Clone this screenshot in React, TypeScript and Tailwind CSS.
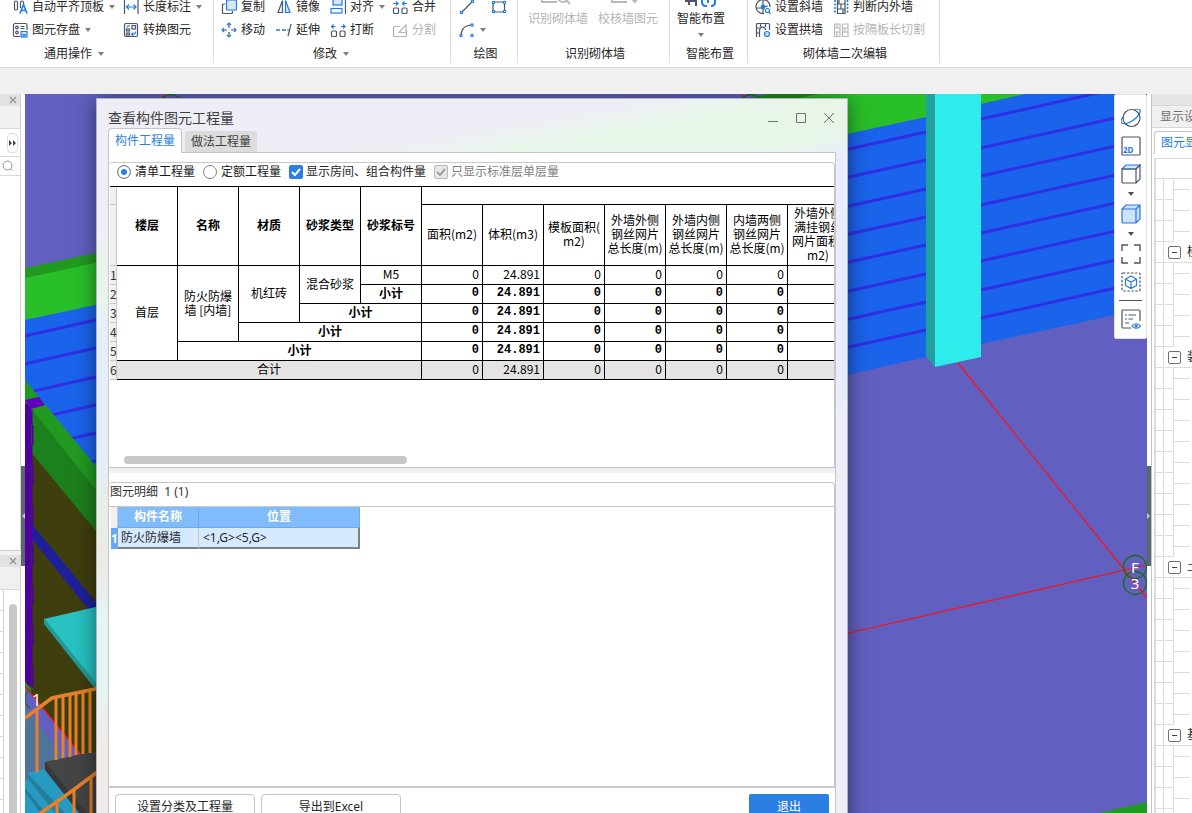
import { useState } from "react"
import type { ReactNode } from "react"
import clsx from "clsx"

type IconProps = { children: ReactNode; size?: number }

function Icon({ children, size = 16 }: IconProps) {
  return (
    <svg
      width={size}
      height={size}
      viewBox={`0 0 ${size} ${size}`}
      fill="none"
      stroke="#4b5468"
      strokeWidth="1.2"
      className="shrink-0"
      aria-hidden="true"
    >
      {children}
    </svg>
  )
}

function Caret({ dark = false }: { dark?: boolean }) {
  return (
    <svg width="8" height="4" viewBox="0 0 8 4" className="shrink-0" aria-hidden="true">
      <path d="M1 0h6L4 4z" fill={dark ? "#4b5060" : "#808080"} />
    </svg>
  )
}

const BLUE = "#1f7ae6"

const icons = {
  align: (
    <Icon>
      <rect x="2.5" y="2" width="3" height="9" rx="1.5" />
      <path d="M8.5 9V3.5a1.5 1.5 0 0 1 3 0V5" />
      <path d="M8 14.5l3.5-9 3.5 9M9.3 11.5h4.5" stroke={BLUE} strokeWidth="1.6" />
    </Icon>
  ),
  save: (
    <Icon>
      <path d="M8 14.5H3A1.5 1.5 0 0 1 1.5 13V3A1.5 1.5 0 0 1 3 1.5h10.5A1.5 1.5 0 0 1 15 3v5" />
      <circle cx="5" cy="5.5" r="1.3" />
      <circle cx="5" cy="10.5" r="1.3" />
      <path d="M8.5 4.5h4M8.5 6.5h4" />
      <path d="M9 9.5h6v5.5H9z" fill="#cfe2fb" stroke={BLUE} />
      <path d="M11 15v-2.5h2V15" stroke={BLUE} />
    </Icon>
  ),
  length: (
    <Icon>
      <path d="M1.5 1v14M15 1v14" />
      <path d="M3.5 8h9.5M6 5.5L3.5 8 6 10.5M10.5 5.5L13 8l-2.5 2.5" stroke={BLUE} />
    </Icon>
  ),
  convert: (
    <Icon>
      <rect x="1.5" y="1.5" width="13" height="13" rx="1.5" />
      <rect x="9" y="3.5" width="3.5" height="3.5" />
      <rect x="3.5" y="7" width="3" height="2" />
      <rect x="3.5" y="11" width="3" height="2" />
      <path d="M4 5.5C4 4 5 3.5 7 4M12.5 9.5c0 2-1 3-3.5 3M10 10.5l-1.5 2 2 1" stroke={BLUE} />
    </Icon>
  ),
  copy: (
    <Icon>
      <path d="M4 5H2.5A1 1 0 0 0 1.5 6v7.5a1 1 0 0 0 1 1h8a1 1 0 0 0 1-1V12" />
      <rect x="5.5" y="1" width="10" height="10" rx="1" fill="#d6e7fc" stroke={BLUE} />
    </Icon>
  ),
  move: (
    <Icon>
      <path d="M8 1v5M8 10v5M1 8h5M10 8h5" />
      <path d="M6 3l2-2 2 2M6 13l2 2 2-2M3 6L1 8l2 2M13 6l2 2-2 2" stroke={BLUE} />
    </Icon>
  ),
  mirror: (
    <Icon>
      <path d="M6.5 1.5v12H2z" />
      <path d="M9.5 1.5v12H14z" fill="#d6e7fc" stroke={BLUE} />
    </Icon>
  ),
  extend: (
    <Icon>
      <path d="M0 8h4M6 8h4" stroke={BLUE} strokeWidth="1.5" />
      <path d="M11 8h2.500M15 2c-1 5-2 8-3 12" />
    </Icon>
  ),
  alignTo: (
    <Icon>
      <path d="M15.5 0v15" />
      <rect x="3" y="0" width="9" height="6" fill="#d6e7fc" stroke={BLUE} />
      <rect x="1" y="9.5" width="11" height="4.5" stroke={BLUE} />
    </Icon>
  ),
  break: (
    <Icon>
      <rect x="1.5" y="9" width="5" height="5.5" rx="1" />
      <rect x="10" y="9" width="5" height="5.5" rx="1" />
      <path d="M1.5 4.5h4M3.5 2.5l-2 2 2 2M15 4.5h-4M13 2.5l2 2-2 2" stroke={BLUE} />
    </Icon>
  ),
  merge: (
    <Icon>
      <rect x="1.5" y="9" width="5" height="5.5" rx="1" />
      <rect x="10" y="9" width="5" height="5.5" rx="1" />
      <path d="M1.5 4.5h4M4 2.5l2 2-2 2M15 4.5h-4M12.5 2.5l-2 2 2 2" stroke={BLUE} />
    </Icon>
  ),
  split: (
    <Icon>
      <path
        d="M8 4.5H2.5a1 1 0 0 0-1 1v8a1 1 0 0 0 1 1h11a1 1 0 0 0 1-1V8M7 10.5l7-7.5v7.5z"
        stroke="#b8b8b8"
      />
    </Icon>
  ),
  line: (
    <Icon>
      <path d="M2.5 13.5l11-11" />
      <circle cx="2.5" cy="13.5" r="1.2" fill="#fff" stroke={BLUE} />
      <circle cx="13.5" cy="2.5" r="1.2" fill="#fff" stroke={BLUE} />
    </Icon>
  ),
  rect: (
    <Icon>
      <rect x="2" y="3" width="11.5" height="10" rx="1" />
      <circle cx="2.5" cy="3.5" r="1.2" fill="#fff" stroke={BLUE} />
      <circle cx="13.5" cy="3.5" r="1.2" fill="#fff" stroke={BLUE} />
      <circle cx="2.5" cy="12.5" r="1.2" fill="#fff" stroke={BLUE} />
      <circle cx="13.5" cy="12.5" r="1.2" fill="#fff" stroke={BLUE} />
    </Icon>
  ),
  arc: (
    <Icon>
      <path d="M2 13.5C2 7 6 3 13 3" />
      <circle cx="2" cy="13.5" r="1.2" fill="#fff" stroke={BLUE} />
      <circle cx="13" cy="3" r="1.2" fill="#fff" stroke={BLUE} />
      <circle cx="13" cy="13.5" r="1.2" fill="#fff" stroke={BLUE} />
    </Icon>
  ),
  slope: (
    <Icon>
      <path d="M9 14.5A7 7 0 1 1 15 8" />
      <path d="M8 0v14M2 9h5M9 8l4-1" />
      <circle cx="8" cy="8" r="1.8" fill={BLUE} stroke={BLUE} />
      <circle cx="12.5" cy="11.5" r="2" stroke={BLUE} />
      <path d="M14 13l1.5 2" stroke={BLUE} />
    </Icon>
  ),
  arch: (
    <Icon>
      <path d="M1.5 15V2.5a1 1 0 0 1 1-1h11a1 1 0 0 1 1 1V8M4.5 15V9c0-5 6-5 6-1M1.5 6h3M5.5 1.5V5M10.5 1.5V5M1.5 11h3" />
      <circle cx="12" cy="12" r="2.5" fill="#cfe2fb" stroke={BLUE} />
    </Icon>
  ),
  judge: (
    <Icon>
      <path d="M2 1v14M14.5 1v14" stroke={BLUE} strokeWidth="1.6" strokeDasharray="2 1.5" />
      <path d="M4.5 1v13.5h7.5V1M4.5 5h7.5M4.5 10h7.5M8 5v5M6 1v4M10 10v4" />
    </Icon>
  ),
  cut: (
    <Icon>
      <path
        d="M1.5 2h5.5v12.5H1.5zM9.5 2H15v12.5H9.5zM1.5 6H7M1.5 10H7M4 2v4M4 10v4M9.5 6H15M9.5 10H15M12 6v4"
        stroke="#b8b8b8"
      />
    </Icon>
  ),
  ocr: (
    <Icon size={34}>
      <path d="M1 2v13h15" stroke="#b8b8b8" strokeWidth="2" />
      <circle cx="22" cy="10" r="5" stroke="#b8b8b8" strokeWidth="2" />
      <path d="M25 13l4 4" stroke="#b8b8b8" strokeWidth="2" />
    </Icon>
  ),
  verify: (
    <Icon size={34}>
      <path d="M1 2v13h15M20 11l4 4 6-8" stroke="#b8b8b8" strokeWidth="2" />
    </Icon>
  ),
  smart: (
    <Icon size={34}>
      <path d="M1 14h12M5 12v6M12 9v10" strokeWidth="2" />
      <path d="M18 13v2q0 4 4 4h1M27 19q4 0 4-4v-2M24 10v6" stroke={BLUE} strokeWidth="2" />
    </Icon>
  ),
}

function Tool({
  icon,
  label,
  caret,
  disabled,
}: {
  icon: ReactNode
  label?: string
  caret?: boolean
  disabled?: boolean
}) {
  return (
    <button
      type="button"
      disabled={disabled}
      aria-label={label ?? "绘图工具"}
      className="flex h-[23px] items-center gap-1 whitespace-nowrap text-[#262626] disabled:text-[#b4b4b4]"
    >
      {icon}
      {label}
      {caret && <Caret />}
    </button>
  )
}

function BigTool({
  icon,
  label,
  caret,
  disabled,
}: {
  icon: ReactNode
  label: string
  caret?: boolean
  disabled?: boolean
}) {
  return (
    <button
      type="button"
      disabled={disabled}
      className="flex flex-col items-center text-[#262626] disabled:text-[#b4b4b4]"
    >
      <span className="-mt-2 h-6 overflow-hidden">{icon}</span>
      <span className="leading-4">{label}</span>
      {caret && (
        <span className="mt-[6px]">
          <Caret />
        </span>
      )}
    </button>
  )
}

function Group({
  title,
  caret,
  className,
  titleClassName = "pl-[3px]",
  children,
}: {
  title: string
  caret?: boolean
  className: string
  titleClassName?: string
  children: ReactNode
}) {
  return (
    <section
      className={clsx("h-[63px] shrink-0 overflow-hidden border-r border-[#dcdcdc]", className)}
    >
      <div className="-mt-[5px] h-[46px]">{children}</div>
      <div
        className={clsx(
          "flex h-[26px] items-center justify-center gap-[5px] text-[#262626]",
          titleClassName
        )}
      >
        {title}
        {caret && <Caret />}
      </div>
    </section>
  )
}

function Ribbon() {
  return (
    <header className="flex h-[68px] shrink-0 overflow-hidden border-b border-[#dcdcdc] bg-white">
      <Group title="通用操作" caret className="w-[214px]" titleClassName="pr-16">
        <div className="grid grid-cols-[111px_auto] pl-3">
          <Tool icon={icons.align} label="自动平齐顶板" caret />
          <Tool icon={icons.length} label="长度标注" caret />
          <Tool icon={icons.save} label="图元存盘" caret />
          <Tool icon={icons.convert} label="转换图元" />
        </div>
      </Group>
      <Group title="修改" caret className="w-[237px]" titleClassName="pr-px">
        <div className="grid grid-cols-[55px_54px_62px_auto] pl-[7px]">
          <Tool icon={icons.copy} label="复制" />
          <Tool icon={icons.mirror} label="镜像" />
          <Tool icon={icons.alignTo} label="对齐" caret />
          <Tool icon={icons.merge} label="合并" />
          <Tool icon={icons.move} label="移动" />
          <Tool icon={icons.extend} label="延伸" />
          <Tool icon={icons.break} label="打断" />
          <Tool icon={icons.split} label="分割" disabled />
        </div>
      </Group>
      <Group title="绘图" className="w-[67px]">
        <div className="grid grid-cols-[32px_auto] pl-2">
          <Tool icon={icons.line} />
          <Tool icon={icons.rect} />
          <Tool icon={icons.arc} caret />
        </div>
      </Group>
      <Group title="识别砌体墙" className="w-[152px]">
        <div className="flex gap-[10px] pl-[10px]">
          <BigTool icon={icons.ocr} label="识别砌体墙" disabled />
          <BigTool icon={icons.verify} label="校核墙图元" disabled />
        </div>
      </Group>
      <Group title="智能布置" className="w-[78px]">
        <div className="flex pl-[7px]">
          <BigTool icon={icons.smart} label="智能布置" caret />
        </div>
      </Group>
      <Group title="砌体墙二次编辑" className="w-[192px]">
        <div className="grid grid-cols-[78px_auto] pl-[7px]">
          <Tool icon={icons.slope} label="设置斜墙" />
          <Tool icon={icons.judge} label="判断内外墙" />
          <Tool icon={icons.arch} label="设置拱墙" />
          <Tool icon={icons.cut} label="按隔板长切割" disabled />
        </div>
      </Group>
    </header>
  )
}

function CloseMark() {
  return (
    <button type="button" aria-label="关闭面板" className="pr-[3px]">
      <svg width="8" height="8" viewBox="0 0 8 8" stroke="#909090" strokeWidth="1.2">
        <path d="M1 1l6 6M7 1L1 7" />
      </svg>
    </button>
  )
}

function LeftPanels() {
  return (
    <aside className="flex w-[21px] shrink-0 flex-col overflow-hidden">
      <div className="flex h-[457px] shrink-0 flex-col border-r border-b border-[#d0d0d0] bg-white">
        <div className="flex h-3 items-center justify-end bg-[#e2e2e2]">
          <CloseMark />
        </div>
        <div className="h-[23px] border-b border-[#d8d8d8] bg-[#f0f0f0]" />
        <div className="flex h-7 items-center justify-end border-b border-[#d8d8d8] pr-[2px]">
          <button
            type="button"
            aria-label="展开"
            className="flex h-5 w-[11px] items-center justify-center rounded border border-[#dcdce4]"
          >
            <svg width="7" height="6" viewBox="0 0 7 6" fill="#3c4254" className="shrink-0">
              <path d="M0 0l3 3-3 3zM4 0l3 3-3 3z" />
            </svg>
          </button>
        </div>
        <div className="flex h-[19px] items-center border-b border-[#d8d8d8] pl-[2px]">
          <svg width="12" height="12" viewBox="0 0 12 12" fill="none" stroke="#909090">
            <circle cx="5.5" cy="5.5" r="4.5" />
            <path d="M8.5 8.5l2 2" />
          </svg>
        </div>
      </div>
      <div className="mt-1 flex flex-1 flex-col border-r border-[#d0d0d0] bg-white">
        <div className="flex h-3 items-center justify-end bg-[#e2e2e2]">
          <CloseMark />
        </div>
        <div className="h-[23px] border-b border-[#d8d8d8] bg-[#f0f0f0]" />
        <div className="flex flex-1 overflow-hidden">
          <div className="w-1 border-r border-[#d0d0d0]">
            {Array.from({ length: 12 }, (_, i) => (
              <div key={i} className="h-[21px] border-b border-[#d8d8d8]" />
            ))}
          </div>
          <div className="mt-[14px] ml-[5px] w-2 rounded-t-full bg-[#c8c8c8]" />
        </div>
      </div>
    </aside>
  )
}

function Splitter({ side }: { side: "left" | "right" }) {
  return (
    <div className="w-1 shrink-0 bg-white pt-[372px]">
      <div className="flex h-[100px] items-center bg-[#5c6870]">
        <svg width="4" height="6" viewBox="0 0 4 6" fill="#c4c8cc">
          <path d={side === "left" ? "M4 0L1 3l3 3z" : "M0 0l3 3-3 3z"} />
        </svg>
      </div>
    </div>
  )
}

const STRIPES_LEFT = [320, 348, 377, 405, 433, 461]
const STRIPES_MID = [132, 160, 189, 217, 245, 274, 302, 330]
const STRIPES_RIGHT = [119, 148, 176, 205, 233, 261, 290, 318]

// 3D model behind the dialog
function Scene() {
  return (
    <svg
      className="absolute inset-0 h-full w-full"
      viewBox="25 94 1122 719"
      preserveAspectRatio="xMinYMin slice"
      aria-hidden="true"
    >
      <rect x="25" y="94" width="1122" height="719" fill="#6160c0" />

      <path d="M25 268L100 252v12L25 278z" fill="#229a22" />
      <path d="M25 278l75-16v43L25 320z" fill="#29bf29" />
      <path d="M25 320l75-16v180L25 384z" fill="#1a64eb" />
      {STRIPES_LEFT.map((y) => (
        <path key={y} d={`M25 ${y + 16}L100 ${y - 1}`} stroke="#302fe8" strokeWidth="3" />
      ))}
      <path d="M25 380L100 471v342H25z" fill="#229a22" />
      <path d="M31 408l33 42 36 45v45L31 452z" fill="#1c801c" />
      <path d="M31 452l69 84v277L31 695z" fill="#3f3e0e" />
      <path d="M31 523l69 84v8h-7L31 538z" fill="#1f1f9c" />
      <path d="M44 619l56-13v84z" fill="#29c2c2" />
      <path d="M44 618v6l56 71v-7z" fill="#229a9a" />
      <path d="M25 686l75 92v35H25z" fill="#6160c0" />
      <path d="M25 706l45 60 30 47H25z" fill="#50739b" />
      <path d="M25 402l6 6v280l-6-6z" fill="#5100a0" />
      <path
        d="M31.5 410v15M32.5 425v20M31.5 445v20M32.5 465v20M31.5 485v20M32.5 505v20M31.5 525v20M32.5 545v20M31.5 565v20M32.5 585v20M31.5 605v20M32.5 625v20M31.5 645v20M32.5 665v22"
        stroke="#5100a0"
        strokeWidth="2"
      />
      <path d="M25 400l14-3 6 8-14 4z" fill="#6000c0" />
      <path d="M80 754l20-5v64H80z" fill="#3f3e0e" />
      <path d="M25 686l56 69" stroke="#ff1010" strokeWidth="1.2" />
      <path d="M28 773l17-4 35 44H25v-32l3-1z" fill="#279ac2" />
      <path d="M28 774v5l27 34h10zM25 788v4l15 21h6z" fill="#227e9c" />
      <path d="M45 762l55-12v63H80z" fill="#454545" />
      <path d="M45 762v8l34 43h8z" fill="#383838" />
      <g stroke="#e88228" fill="none">
        <path
          d="M37 711v61M56 698v62M63 697v61M70 695v62M76 694v61M83 692v62M90 691v62M57 801v12M74 790v23M91 778v35"
          strokeWidth="3"
        />
        <path d="M25 718l27-20 48-10M38 815l34-24 28-21" strokeWidth="3.5" />
      </g>
      <path d="M30 708a11 11 0 0 1 4-20" fill="none" stroke="#127012" strokeWidth="1.2" />
      <text x="32" y="706" fontSize="16" fill="#fff" fontFamily="Noto Sans">
        1
      </text>

      <path d="M750 98l100-22v60h-60z" fill="#1f8c1f" />
      <path d="M790 100l50-10h110v40l-103 4z" fill="#29bf29" />
      <path d="M847 134l79-17v240l-79 18z" fill="#1a64eb" />
      {STRIPES_MID.map((y) => (
        <path key={y} d={`M840 ${y + 19}L926 ${y}`} stroke="#302fe8" strokeWidth="3" />
      ))}
      <path d="M981 94h50l-50 12z" fill="#29bf29" />
      <path d="M981 104l44-10h122v214L981 344z" fill="#1a64eb" />
      {STRIPES_RIGHT.map((y) => (
        <path key={y} d={`M981 ${y}L1147 ${y - 37}`} stroke="#302fe8" strokeWidth="3" />
      ))}
      <path d="M926 94h9v273l-9-11z" fill="#229f9f" />
      <path d="M935 94h46v263l-46 10z" fill="#30ebeb" />

      <g stroke="#ff1010" strokeWidth="1.2" fill="none">
        <path d="M958 363l189 235M840 635l307-70M162 94l4 5M742 94l4 5" />
      </g>
      <g stroke="#127012" strokeWidth="1.3" fill="none">
        <circle cx="1135" cy="567" r="11.5" />
        <circle cx="1135" cy="583" r="11.5" />
        <circle cx="171" cy="106" r="11.5" />
        <circle cx="751" cy="106" r="11.5" />
      </g>
      <g fill="#fff" fontSize="15" fontFamily="Noto Sans" textAnchor="middle">
        <text x="1135" y="573">F</text>
        <text x="1135" y="589">3</text>
      </g>
      <path d="M1099 813l48-11v11z" fill="#229a22" />
    </svg>
  )
}

function ViewToolbar() {
  const tool = "block cursor-pointer"
  return (
    <div className="absolute top-0 right-0 flex w-[33px] flex-col items-center gap-2 rounded-xs border border-[#e0e0e0] bg-white pt-[13px] pb-[9px]">
      <button type="button" aria-label="动态观察" className={tool}>
        <Icon size={20}>
          <circle cx="10.5" cy="10" r="8.5" />
          <path d="M3 8C0 11-1 14 1 15c3 2 10-1 14-5 3-3 5-6 4-8-1-1-4-1-6 0" stroke={BLUE} />
        </Icon>
      </button>
      <button type="button" aria-label="二维视图" className={tool}>
        <Icon size={20}>
          <rect x="1" y="1" width="18" height="18" rx="1" />
          <text x="2" y="17" fontSize="8" fontWeight="700" fill={BLUE} stroke="none" fontFamily="Noto Sans">
            2D
          </text>
        </Icon>
      </button>
      <button type="button" aria-label="三维视图" className={tool}>
        <Icon size={20}>
          <path d="M1 5l4-4h14l-4 4z" fill="#d6e7fc" stroke={BLUE} />
          <path d="M1 5h14v14H2a1 1 0 0 1-1-1zM15 19l4-4V1l-4 4" />
        </Icon>
      </button>
      <Caret dark />
      <button type="button" aria-label="实体显示" className={tool}>
        <Icon size={20}>
          <path
            d="M1 5l4-4h14v14l-4 4H2a1 1 0 0 1-1-1zM1 5h14v14M15 5l4-4"
            fill="#cfe2fb"
            stroke={BLUE}
          />
        </Icon>
      </button>
      <Caret dark />
      <button type="button" aria-label="全屏" className={tool}>
        <Icon size={20}>
          <path d="M1 7V1h6M13 1h6v6M19 13v6h-6M7 19H1v-6" strokeWidth="1.4" />
        </Icon>
      </button>
      <button type="button" aria-label="选择显示" className={tool}>
        <Icon size={20}>
          <rect x="1" y="1" width="18" height="18" rx="1" strokeDasharray="2.5 1.5" />
          <path d="M10 4l5.5 3v6.5L10 16.5l-5.5-3V7zM4.5 7l5.5 3 5.5-3M10 10v6.5" stroke={BLUE} />
        </Icon>
      </button>
      <div className="h-px w-[23px] bg-[#4b5468]" />
      <button type="button" aria-label="显示设置" className={tool}>
        <Icon size={20}>
          <path d="M10 19H2a1 1 0 0 1-1-1V2a1 1 0 0 1 1-1h16a1 1 0 0 1 1 1v10M4 6h2M7.5 6H15M4 10h2M7.5 10H12M4 14h4" />
          <path d="M11 17c2-3 6.5-3 8.5 0-2 3-6.5 3-8.5 0z" stroke={BLUE} />
          <circle cx="15.2" cy="17" r="1" fill={BLUE} stroke={BLUE} />
        </Icon>
      </button>
    </div>
  )
}

const TREE = [
  { label: "", leaves: 3 },
  { label: "楼", leaves: 4 },
  { label: "装", leaves: 9 },
  { label: "土", leaves: 7 },
  { label: "基", leaves: 4 },
]

function RightPanel() {
  return (
    <aside className="flex w-[41px] shrink-0 flex-col overflow-hidden border-l border-[#c4c4c4] bg-white">
      <div className="h-[11px] shrink-0 bg-[#e6e6e6]" />
      <div className="flex h-[23px] shrink-0 items-center border-y border-[#d8d8d8] bg-[#f0f0f0] pl-2 whitespace-nowrap text-[#707070]">
        显示设置
      </div>
      <div className="mt-[3px] ml-[2px] flex h-[23px] shrink-0 items-center rounded-tl border-t border-l border-[#c4c4c4] pl-[6px] whitespace-nowrap text-[#1f7ae6]">
        图元显示
      </div>
      <div className="mt-1 ml-[2px] flex-1 overflow-hidden border-l-2 border-[#dcdcdc]">
        <div className="h-[21px] border-y border-[#dcdcdc]" />
        {TREE.map((node, i) => (
          <div key={i}>
            {node.label && (
              <div className="flex h-[21px] items-center border-b border-[#dcdcdc]">
                <span className="h-full w-2 shrink-0 border-r border-[#dcdcdc]" />
                <button
                  type="button"
                  aria-label={`折叠 ${node.label}`}
                  className="ml-1 flex h-[13px] w-[13px] shrink-0 items-center justify-center rounded-xs border border-[#707070]"
                >
                  <span className="h-px w-[5px] bg-[#404040]" />
                </button>
                <span className="ml-[6px] whitespace-nowrap text-[#262626]">{node.label}</span>
              </div>
            )}
            {Array.from({ length: node.leaves }, (_, n) => (
              <div key={n} className="flex h-[21px]">
                <span className="w-2 shrink-0 border-r border-b border-[#dcdcdc]" />
                <span className="w-[10px] shrink-0 border-r border-b border-[#dcdcdc]" />
                <span className="h-[11px] w-4 shrink-0 border-b border-[#dcdcdc]" />
              </div>
            ))}
          </div>
        ))}
      </div>
    </aside>
  )
}

function Radio({
  label,
  checked,
  onChange,
}: {
  label: string
  checked: boolean
  onChange: () => void
}) {
  return (
    <label className="flex items-center gap-1 text-[#1a1a1a]">
      <input
        type="radio"
        name="quantity"
        checked={checked}
        onChange={onChange}
        className="h-[14px] w-[14px] appearance-none rounded-full border border-[#808080] bg-white checked:bg-[#2b7fe2] checked:shadow-[inset_0_0_0_3px_white]"
      />
      {label}
    </label>
  )
}

function Check({ label, disabled }: { label: string; disabled?: boolean }) {
  return (
    <label
      className={clsx("flex items-center gap-[3px]", disabled ? "text-[#808080]" : "text-[#262626]")}
    >
      <span className="grid">
        <input
          type="checkbox"
          defaultChecked
          disabled={disabled}
          className="col-start-1 row-start-1 h-[14px] w-[14px] appearance-none rounded-xs border border-[#2b7fe2] bg-[#2b7fe2] disabled:border-[#b8b8b8] disabled:bg-[#e8e8e8]"
        />
        <svg
          viewBox="0 0 14 14"
          fill="none"
          strokeWidth="2"
          stroke={disabled ? "#a0a0a0" : "#fff"}
          className="pointer-events-none col-start-1 row-start-1 h-[14px] w-[14px]"
        >
          <path d="M3 7l3 3 5-6" />
        </svg>
      </span>
      {label}
    </label>
  )
}

const CELL = "border-r border-b border-black pb-[2px]"
const GUTTER = "border-r border-b border-[#c8c8c8] bg-[#f0f0f0] p-0 text-left font-normal text-[#333]"

const KEY_COLUMNS = ["楼层", "名称", "材质", "砂浆类型", "砂浆标号"]
const VALUE_COLUMNS = [
  ["面积(m2)"],
  ["体积(m3)"],
  ["模板面积(", "m2)"],
  ["外墙外侧", "钢丝网片", "总长度(m)"],
  ["外墙内侧", "钢丝网片", "总长度(m)"],
  ["内墙两侧", "钢丝网片", "总长度(m)"],
  ["外墙外侧", "满挂钢丝", "网片面积(", "m2)"],
]
const VALUES = ["0", "24.891", "0", "0", "0", "0", ""]

function Values({ bold }: { bold?: boolean }) {
  return (
    <>
      {VALUES.map((v, i) => (
        <td
          key={i}
          className={clsx(
            CELL,
            "pr-[3px] text-right",
            bold && "font-['Liberation_Mono','Noto_Sans_CJK_SC',monospace] font-bold"
          )}
        >
          {v}
        </td>
      ))}
    </>
  )
}

function QuantityTable() {
  return (
    <table className="w-[679px] table-fixed border-separate border-spacing-0 border-t border-black text-center font-['Noto_Sans_CJK_SC',sans-serif] leading-[14px] text-black">
      <colgroup>
        <col className="w-[7px]" />
        {[...KEY_COLUMNS, ...VALUES].map((_, i) => (
          <col key={i} className="w-[61px]" />
        ))}
      </colgroup>
      <thead>
        <tr className="h-[18px]">
          <th className={GUTTER} />
          {KEY_COLUMNS.map((c) => (
            <th key={c} rowSpan={2} className={clsx(CELL, "font-bold whitespace-nowrap")}>
              {c}
            </th>
          ))}
          <th colSpan={7} className={CELL} />
        </tr>
        <tr className="h-[61px]">
          <th className={GUTTER} />
          {VALUE_COLUMNS.map((lines, i) => (
            <th key={i} className={clsx(CELL, "font-normal whitespace-nowrap")}>
              {lines.map((line) => (
                <span key={line} className="block">
                  {line}
                </span>
              ))}
            </th>
          ))}
        </tr>
      </thead>
      <tbody>
        <tr className="h-[19px]">
          <th className={GUTTER}>1</th>
          <td rowSpan={5} className={CELL}>首层</td>
          <td rowSpan={4} className={CELL}>
            防火防爆
            <br />墙 [内墙]
          </td>
          <td rowSpan={3} className={CELL}>机红砖</td>
          <td rowSpan={2} className={CELL}>混合砂浆</td>
          <td className={CELL}>M5</td>
          <Values />
        </tr>
        <tr className="h-[19px]">
          <th className={GUTTER}>2</th>
          <td className={clsx(CELL, "font-bold")}>小计</td>
          <Values bold />
        </tr>
        <tr className="h-[19px]">
          <th className={GUTTER}>3</th>
          <td colSpan={2} className={clsx(CELL, "font-bold")}>小计</td>
          <Values bold />
        </tr>
        <tr className="h-[19px]">
          <th className={GUTTER}>4</th>
          <td colSpan={3} className={clsx(CELL, "font-bold")}>小计</td>
          <Values bold />
        </tr>
        <tr className="h-[19px]">
          <th className={GUTTER}>5</th>
          <td colSpan={4} className={clsx(CELL, "font-bold")}>小计</td>
          <Values bold />
        </tr>
        <tr className="h-[19px] bg-[#e4e4e4]">
          <th className={GUTTER}>6</th>
          <td colSpan={5} className={CELL}>合计</td>
          <Values />
        </tr>
      </tbody>
    </table>
  )
}

function DetailTable() {
  return (
    <table className="w-[249px] table-fixed border-separate border-spacing-0 text-[#262626]">
      <colgroup>
        <col className="w-[7px]" />
        <col className="w-[81px]" />
        <col className="w-[161px]" />
      </colgroup>
      <thead>
        <tr className="h-[21px] text-white">
          <th className="border-r border-[#c8c8c8] bg-[#f0f0f0] p-0" />
          <th className="border-r border-b border-[#6aa9ee] bg-[#80bbfb] p-0">构件名称</th>
          <th className="border-r border-b border-[#6aa9ee] bg-[#80bbfb] p-0">位置</th>
        </tr>
      </thead>
      <tbody>
        <tr className="h-[21px]">
          <th className="bg-[#64a8f4] p-0 text-left text-white">1</th>
          <td className="border-r border-b-2 border-r-[#c4c8cc] border-b-[#808080] bg-[#d6eaff] pl-[3px]">
            防火防爆墙
          </td>
          <td className="border-r-2 border-b-2 border-[#808080] bg-[#d6eaff] pl-1">
            &lt;1,G&gt;&lt;5,G&gt;
          </td>
        </tr>
      </tbody>
    </table>
  )
}

function QuantityDialog() {
  const [mode, setMode] = useState<"list" | "quota">("list")

  return (
    <div
      role="dialog"
      aria-label="查看构件图元工程量"
      className="absolute top-1 -bottom-[17px] left-[71px] w-[752px] border border-[#b4b4bc] bg-[linear-gradient(180deg,#efeef7_0%,#efeef7_18%,#e8f5ea_23%,#e8f5ea_27%,#e6edfb_32%,#e6edfb_48%,#e6eee6_56%,#edeae6_64%,#e4f5f5_72%,#e4f5f5_80%,#f0ebe8_88%)] shadow-[0_2px_20px_rgba(0,0,0,0.5)]"
    >
      <div className="h-full bg-[linear-gradient(180deg,#e8eefb_0%,#e6edfb_40%,#eeeef8_44%)] bg-[length:20px_100%] bg-right-top bg-no-repeat">
        <div className="flex h-full flex-col bg-[linear-gradient(170deg,#efeef7_52%,#e8f6ea_66%,#e8f6ea_90%,#e8eefb_100%)] bg-[length:100%_54px] bg-no-repeat px-[11px]">
          <div className="flex h-[29px] shrink-0 items-center justify-between pt-2">
            <h1 className="text-sm leading-4 text-[#404040]">查看构件图元工程量</h1>
            <div className="flex gap-4 pr-[1px]">
              <button type="button" aria-label="最小化">
                <svg width="12" height="12" viewBox="0 0 12 12" fill="none" stroke="#707070">
                  <path d="M1 9.5h10" />
                </svg>
              </button>
              <button type="button" aria-label="最大化">
                <svg width="12" height="12" viewBox="0 0 12 12" fill="none" stroke="#707070">
                  <path d="M1.5 1.5h9v9h-9z" />
                </svg>
              </button>
              <button type="button" aria-label="关闭">
                <svg width="12" height="12" viewBox="0 0 12 12" fill="none" stroke="#707070">
                  <path d="M1 1l10 10M11 1L1 11" />
                </svg>
              </button>
            </div>
          </div>

          <div role="tablist" className="flex h-6 shrink-0 items-end gap-[3px]">
            <button
              type="button"
              role="tab"
              aria-selected="true"
              className="relative -mb-px h-[25px] rounded-t border border-b-0 border-[#c4c6cc] bg-white px-[6px] text-[#2b7fe2]"
            >
              构件工程量
            </button>
            <button
              type="button"
              role="tab"
              aria-selected="false"
              className="h-[21px] rounded-t-xs bg-[#dcdcdc] px-[6px] text-[#404040]"
            >
              做法工程量
            </button>
          </div>

          <div className="flex min-h-0 flex-1 flex-col border border-[#c4c6cc] bg-white pt-[9px]">
            <div className="flex h-[306px] shrink-0 flex-col overflow-hidden rounded-t border-t border-r border-b border-[#c8c8c8] pl-px">
              <div className="flex h-[23px] shrink-0 items-center gap-2 pb-[6px] pl-[7px]">
                <Radio label="清单工程量" checked={mode === "list"} onChange={() => setMode("list")} />
                <Radio label="定额工程量" checked={mode === "quota"} onChange={() => setMode("quota")} />
                <Check label="显示房间、组合构件量" />
                <Check label="只显示标准层单层量" disabled />
              </div>
              <div className="flex-1 overflow-hidden">
                <QuantityTable />
              </div>
              <div className="mb-[3px] ml-[14px] h-2 w-[283px] shrink-0 rounded-full bg-[#c8c8c8]" />
            </div>
            <div className="h-[5px] shrink-0 bg-[#f0f0f0]" />
            <div className="mt-[9px] flex min-h-0 flex-1 flex-col rounded-t border-t border-r border-b-2 border-[#c8c8c8]">
              <h2 className="flex h-6 shrink-0 items-center border-b border-[#c8c8c8] pb-[5px] pl-px whitespace-pre text-[#333]">
                图元明细  1 (1)
              </h2>
              <div className="pl-[2px]">
                <DetailTable />
              </div>
            </div>
            <div className="flex gap-[6px] px-[6px] pt-[6px] pb-2 text-[#262626]">
              <button type="button" className="h-[26px] w-[140px] rounded border border-[#c4c4c4] bg-white">
                设置分类及工程量
              </button>
              <button type="button" className="h-[26px] w-[140px] rounded border border-[#c4c4c4] bg-white">
                导出到Excel
              </button>
              <button type="button" className="ml-auto h-[26px] w-20 rounded-xs bg-[#2b7fe2] text-white">
                退出
              </button>
            </div>
          </div>
        </div>
      </div>
    </div>
  )
}

export default function App() {
  return (
    <div className="flex h-screen flex-col overflow-hidden bg-[#f0f0f0] font-['Noto_Sans','Noto_Sans_CJK_SC',sans-serif] text-xs leading-4">
      <Ribbon />
      <div className="h-[26px] shrink-0 bg-[#f0f0f0]" />
      <div className="flex min-h-0 flex-1">
        <LeftPanels />
        <Splitter side="left" />
        <main className="relative min-w-0 flex-1 overflow-hidden">
          <Scene />
          <QuantityDialog />
          <ViewToolbar />
        </main>
        <Splitter side="right" />
        <RightPanel />
      </div>
    </div>
  )
}
